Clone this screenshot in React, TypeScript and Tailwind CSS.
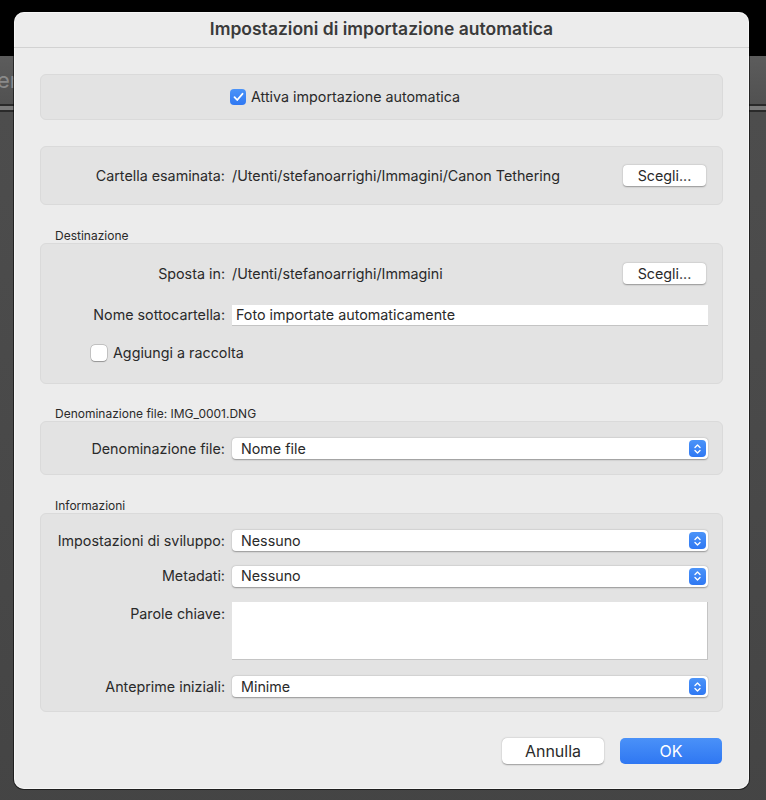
import React from 'react';

const font = { fontFamily: 'Inter, "Noto Sans", "Liberation Sans", sans-serif' };

const Stepper = () => (
  <span className="flex h-[17px] w-[17px] items-center justify-center rounded-[4px] bg-gradient-to-b from-[#4b93f8] to-[#2f78f3]">
    <svg width="9" height="12" viewBox="0 0 9 12" fill="none">
      <path d="M2 4.5 L4.5 2 L7 4.5" stroke="white" strokeWidth="1.4" strokeLinecap="round" strokeLinejoin="round" />
      <path d="M2 7.5 L4.5 10 L7 7.5" stroke="white" strokeWidth="1.4" strokeLinecap="round" strokeLinejoin="round" />
    </svg>
  </span>
);

const Select = ({ value }: { value: string }) => (
  <div className="flex h-[21px] w-[476px] items-center justify-between rounded-[4px] bg-white pl-[9px] pr-[2px] shadow-[0_0.5px_1.5px_rgba(0,0,0,0.35)]">
    <span>{value}</span>
    <Stepper />
  </div>
);

const ChooseButton = () => (
  <button className="flex h-[21px] w-[83px] items-center justify-center rounded-[4px] bg-white text-[14.3px] text-[#2a2a2a] shadow-[0_0.5px_1.5px_rgba(0,0,0,0.35)]">
    Scegli...
  </button>
);

const Row = ({ label, children }: { label: string; children: React.ReactNode }) => (
  <div className="flex items-center">
    <div className="w-[191px] shrink-0 pr-[7px] text-right">{label}</div>
    {children}
  </div>
);

const SectionLabel = ({ text, className }: { text: string; className: string }) => (
  <div className={'h-[14px] pl-[15px] text-[12px] leading-[14px] text-[#2a2a2a] ' + className}>{text}</div>
);

const Panel = ({ className, children }: { className?: string; children: React.ReactNode }) => (
  <div className={'rounded-[6px] border border-[#dadada] bg-[#e3e3e3] ' + (className ?? '')}>{children}</div>
);

export default function App() {
  return (
    <div className="relative h-[800px] w-[766px] overflow-hidden bg-[#474747]" style={font}>
      {/* window behind the dialog */}
      <div className="h-[56px] bg-black" />
      <div className="flex h-[48px] items-center bg-gradient-to-b from-[#5c5c5c] to-[#515151] text-[22px] text-[#8a8a8a]">
        <span className="-ml-[3px]">er</span>
      </div>
      <div className="h-[2px] bg-[#2a2a2a]" />
      <div className="h-[4px] bg-[#7a7a7a]" />
      <div className="h-[2px] bg-[#2a2a2a]" />
      <div className="h-full bg-gradient-to-b from-[#4d4d4d] to-[#434343]" />

      {/* dialog */}
      <div className="absolute left-[14px] top-[12px] flex h-[777px] w-[735px] flex-col rounded-[10px] bg-[#ececec] text-[14.3px] text-[#2a2a2a] shadow-[0_0_0_1px_rgba(0,0,0,0.55),inset_0_0_0_1px_rgba(255,255,255,0.5)]">
        <div className="flex h-[36px] shrink-0 items-center justify-center border-b border-[#d2d2d2] text-[17.5px] font-semibold text-[#3a3a3a]">
          Impostazioni di importazione automatica
        </div>

        <div className="flex flex-col px-[26px] pt-[26px]">
          <Panel className="flex h-[46px] items-center pl-[189px]">
            <span className="flex h-[16px] w-[16px] items-center justify-center rounded-[4px] bg-gradient-to-b from-[#4b93f8] to-[#2f78f3]">
              <svg width="11" height="10" viewBox="0 0 11 10" fill="none">
                <path d="M1.5 5.2 L4.2 8 L9.5 1.8" stroke="white" strokeWidth="1.8" strokeLinecap="round" strokeLinejoin="round" />
              </svg>
            </span>
            <span className="ml-[5px]">Attiva importazione automatica</span>
          </Panel>

          <Panel className="mt-[26px] flex h-[59px] items-center justify-between pr-[16px]">
            <Row label="Cartella esaminata:">
              <span>/Utenti/stefanoarrighi/Immagini/Canon Tethering</span>
            </Row>
            <ChooseButton />
          </Panel>

          <SectionLabel text="Destinazione" className="mt-[24px]" />
          <Panel className="flex h-[141px] flex-col pt-[19px]">
            <div className="flex items-center justify-between pr-[16px]">
              <Row label="Sposta in:">
                <span>/Utenti/stefanoarrighi/Immagini</span>
              </Row>
              <ChooseButton />
            </div>
            <div className="mt-[20px]">
              <Row label="Nome sottocartella:">
                <div className="flex h-[21px] w-[476px] items-center border-b border-[#c4c4c4] bg-white pl-[4px]">
                  Foto importate automaticamente
                </div>
              </Row>
            </div>
            <div className="mt-[16px] flex items-center pl-[50px]">
              <span className="h-[16px] w-[16px] rounded-[4px] bg-white shadow-[0_0_0_0.5px_rgba(0,0,0,0.25),0_0.5px_1px_rgba(0,0,0,0.25)]" />
              <span className="ml-[6px]">Aggiungi a raccolta</span>
            </div>
          </Panel>

          <SectionLabel text="Denominazione file: IMG_0001.DNG" className="mt-[23px]" />
          <Panel className="flex h-[54px] flex-col pt-[16px]">
            <Row label="Denominazione file:">
              <Select value="Nome file" />
            </Row>
          </Panel>

          <SectionLabel text="Informazioni" className="mt-[24px]" />
          <Panel className="flex h-[199px] flex-col pt-[16px]">
            <Row label="Impostazioni di sviluppo:">
              <Select value="Nessuno" />
            </Row>
            <div className="mt-[14px]">
              <Row label="Metadati:">
                <Select value="Nessuno" />
              </Row>
            </div>
            <div className="mt-[15px] flex items-start">
              <div className="w-[191px] shrink-0 pr-[7px] pt-[1px] text-right">Parole chiave:</div>
              <div className="h-[58px] w-[476px] border-b border-r border-[#c4c4c4] bg-white" />
            </div>
            <div className="mt-[16px]">
              <Row label="Anteprime iniziali:">
                <Select value="Minime" />
              </Row>
            </div>
          </Panel>

          <div className="mt-[26px] flex justify-end gap-[16px] pr-[1px] text-[16px]">
            <button className="flex h-[26px] w-[102px] items-center justify-center rounded-[5px] bg-white text-[#2a2a2a] shadow-[0_0.5px_1.5px_rgba(0,0,0,0.35)]">
              Annulla
            </button>
            <button className="flex h-[26px] w-[102px] items-center justify-center rounded-[5px] bg-gradient-to-b from-[#4a91f8] to-[#2f77f2] text-white">
              OK
            </button>
          </div>
        </div>
      </div>
    </div>
  );
}
